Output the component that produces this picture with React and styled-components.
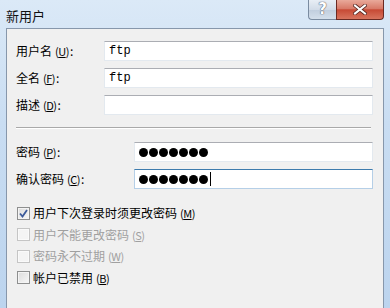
import React from 'react';
import styled, { createGlobalStyle } from 'styled-components';

const GlobalStyle = createGlobalStyle`
    html, body {
        margin: 0;
        padding: 0;
        background: #c8dcf1;
        overflow: hidden;
    }
`;

const cjk = `"Noto Sans CJK SC", "DejaVu Sans", sans-serif`;

function Password({ length, focused }) {
    return (
        <TextBox $focused={focused}>
            {Array.from({ length }).map((_, i) => <Dot key={i} />)}
            {focused && <Caret />}
        </TextBox>
    );
}

export default function App() {
    return (
        <Window>
            <GlobalStyle />
            <TitleBar>
                <Title>新用户</Title>
                <Caption>
                    <HelpButton>?</HelpButton>
                    <CloseButton>
                        <svg width="14" height="11" viewBox="0 0 14 11">
                            <path d="M2 1.5 L12 9.5 M12 1.5 L2 9.5" stroke="#5a2a24" strokeWidth="3.6" strokeLinecap="square" />
                            <path d="M2 1.5 L12 9.5 M12 1.5 L2 9.5" stroke="#fff" strokeWidth="2" strokeLinecap="square" />
                        </svg>
                    </CloseButton>
                </Caption>
            </TitleBar>
            <Client>
                <Fields>
                    <FieldRow $label={88}>
                        <Label>用户名<Key>(<u>U</u>)</Key>:</Label>
                        <TextBox>ftp</TextBox>
                    </FieldRow>
                    <FieldRow $label={88}>
                        <Label>全名<Key>(<u>F</u>)</Key>:</Label>
                        <TextBox>ftp</TextBox>
                    </FieldRow>
                    <FieldRow $label={88}>
                        <Label>描述<Key>(<u>D</u>)</Key>:</Label>
                        <TextBox />
                    </FieldRow>
                </Fields>
                <Separator $top={12} />
                <Fields $top={14}>
                    <FieldRow $label={118}>
                        <Label>密码<Key>(<u>P</u>)</Key>:</Label>
                        <Password length={7} />
                    </FieldRow>
                    <FieldRow $label={118}>
                        <Label>确认密码<Key>(<u>C</u>)</Key>:</Label>
                        <Password length={7} focused />
                    </FieldRow>
                </Fields>
                <Checks>
                    <CheckRow>
                        <Box $checked>
                            <svg width="9" height="9" viewBox="0 0 9 9">
                                <path d="M1 4.5 L3.5 7.5 L8 1" fill="none" stroke="#3c5a9a" strokeWidth="1.8" />
                            </svg>
                        </Box>
                        <CheckText>用户下次登录时须更改密码<Key>(<u>M</u>)</Key></CheckText>
                    </CheckRow>
                    <CheckRow>
                        <Box $disabled />
                        <CheckText $disabled>用户不能更改密码<Key>(<u>S</u>)</Key></CheckText>
                    </CheckRow>
                    <CheckRow>
                        <Box $disabled />
                        <CheckText $disabled>密码永不过期<Key>(<u>W</u>)</Key></CheckText>
                    </CheckRow>
                    <CheckRow>
                        <Box />
                        <CheckText>帐户已禁用<Key>(<u>B</u>)</Key></CheckText>
                    </CheckRow>
                </Checks>
                <Separator $top={21} />
            </Client>
        </Window>
    );
}

const Window = styled.div`
    width: 390px;
    height: 308px;
    display: flex;
    flex-direction: column;
    background: linear-gradient(180deg, #dbe9f7 0%, #c9ddf2 40%, #bcd4ee 100%);
    box-sizing: border-box;
`;

const TitleBar = styled.div`
    height: 28px;
    display: flex;
    justify-content: space-between;
    align-items: flex-start;
    padding: 0 6px;
    flex-shrink: 0;
`;

const Title = styled.div`
    font: 13px/28px ${cjk};
    color: #111;
    padding-top: 2px;
`;

const Caption = styled.div`
    display: flex;
`;

const HelpButton = styled.div`
    width: 28px;
    height: 20px;
    box-sizing: border-box;
    border: 1px solid #7a8ba0;
    border-top: none;
    border-right: none;
    border-radius: 0 0 0 4px;
    background: linear-gradient(180deg, #e8eef5 0%, #d2dce8 50%, #c0cddd 51%, #d4dfeb 100%);
    color: #fff;
    font: bold 15px/19px "DejaVu Sans", sans-serif;
    text-align: center;
    text-shadow: 0 0 1px #445, 0 0 1px #445;
`;

const CloseButton = styled.div`
    width: 48px;
    height: 20px;
    box-sizing: border-box;
    border: 1px solid #6b2a22;
    border-top: none;
    border-radius: 0 0 4px 0;
    background: linear-gradient(180deg, #e9a99a 0%, #d87a68 45%, #c74a35 52%, #d8745e 100%);
    display: flex;
    align-items: center;
    justify-content: center;
`;

const Client = styled.div`
    flex: 1;
    margin: 0 6px;
    border: 1px solid #8797ab;
    border-bottom: none;
    background: #f0f0f0;
    padding: 12px 10px 0 9px;
    display: flex;
    flex-direction: column;
`;

const Fields = styled.div`
    display: flex;
    flex-direction: column;
    gap: 7px;
    margin-top: ${p => p.$top || 0}px;
`;

const FieldRow = styled.div`
    display: grid;
    grid-template-columns: ${p => p.$label}px 1fr;
    align-items: center;
    height: 20px;
`;

const Label = styled.div`
    font: 12px/20px ${cjk};
    color: #000;
    white-space: nowrap;
`;

const Key = styled.span`
    font: 11px ${cjk};
    margin: 0 1px 0 3px;
    letter-spacing: -0.5px;
`;

const TextBox = styled.div`
    height: 20px;
    box-sizing: border-box;
    background: #fff;
    border: 1px solid ${p => (p.$focused ? '#b5cfe7' : '#e3e9ef')};
    border-top-color: ${p => (p.$focused ? '#3d7bad' : '#abadb3')};
    padding: 0 3px 0 4px;
    display: flex;
    align-items: center;
    font: 12px "Liberation Mono", monospace;
    color: #000;
`;

const Dot = styled.span`
    width: 9px;
    height: 9px;
    border-radius: 50%;
    background: #000;
    margin-right: 1px;
`;

const Caret = styled.span`
    width: 1px;
    height: 14px;
    background: #000;
    margin-left: 1px;
`;

const Separator = styled.div`
    height: 1px;
    margin-top: ${p => p.$top}px;
    margin-right: 2px;
    background: #a9a9a9;
    box-shadow: 0 1px 0 #fff;
    flex-shrink: 0;
`;

const Checks = styled.div`
    display: flex;
    flex-direction: column;
    margin-top: 13px;
`;

const CheckRow = styled.div`
    display: flex;
    align-items: center;
    height: 20.5px;
    gap: 3px;
    padding-top: 1px;
`;

const Box = styled.div`
    width: 13px;
    height: 13px;
    margin-left: 1px;
    box-sizing: border-box;
    border: 1px solid ${p => (p.$disabled ? '#c5c5c5' : '#8e8f8f')};
    background: ${p => (p.$disabled ? '#f4f4f4' : 'linear-gradient(135deg, #dcdcdc 0%, #f7f7f7 100%)')};
    box-shadow: inset 0 0 0 1px ${p => (p.$disabled ? '#fafafa' : '#f4f4f4')};
    display: flex;
    align-items: center;
    justify-content: center;
`;

const CheckText = styled.div`
    font: 12px/20px ${cjk};
    color: ${p => (p.$disabled ? '#a0a0a0' : '#000')};
    white-space: nowrap;
`;
